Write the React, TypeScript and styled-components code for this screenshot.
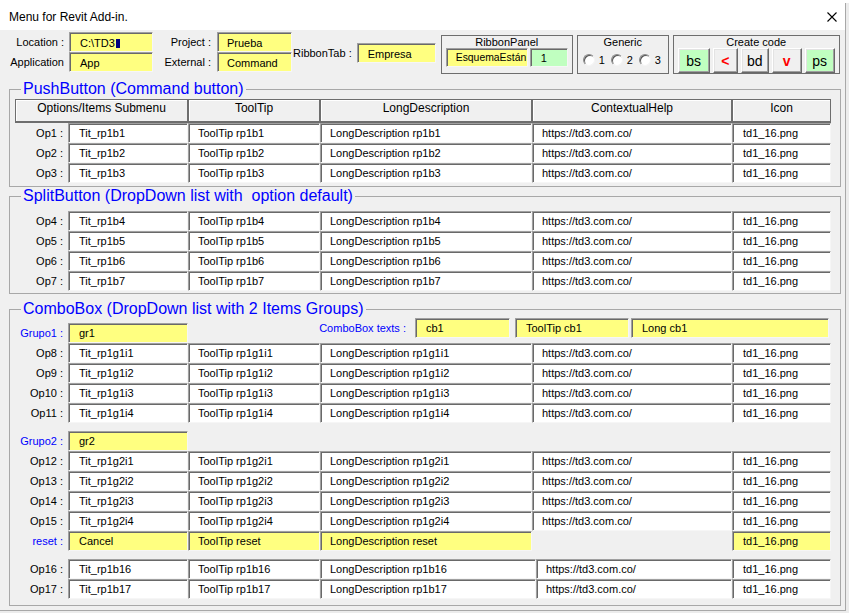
import React from 'react';
import styled, { createGlobalStyle } from 'styled-components';

const GlobalStyle = createGlobalStyle`
  * { box-sizing: border-box; }
  html, body { margin: 0; padding: 0; }
  body {
    width: 849px;
    height: 613px;
    overflow: hidden;
    background: #ffffff;
    font-family: "Liberation Sans", Arial, sans-serif;
    color: #000000;
  }
`;

type Tone = 'white' | 'yellow' | 'green';
const TONES: Record<Tone, string> = {
  white: '#ffffff',
  yellow: '#ffff80',
  green: '#c0ffc0',
};

const URL = 'https://td3.com.co/';
const ICON = 'td1_16.png';
const COLS = '53px 120px 132px 212px 200px 99px';
const COLS_WIDE = '53px 120px 132px 216px 196px 99px';

const Desktop = styled.div`
  width: 849px;
  height: 613px;
  padding-top: 3px;
  background: linear-gradient(to bottom, #ffffff 0, #ffffff 3px, #ececec 3px);
`;

const Window = styled.div`
  width: 846px;
  height: 608px;
  background: #f0f0f0;
  border-right: 1px solid #a8a8a8;
  border-bottom: 1px solid #a8a8a8;
  display: flex;
  flex-direction: column;
`;

const TitleBar = styled.div`
  flex: none;
  height: 27px;
  background: #ffffff;
  display: flex;
  align-items: center;
  justify-content: space-between;
  padding: 0 8px 0 9px;
  font-size: 12px;
  line-height: 14px;
`;

const Content = styled.div`
  flex: 1;
  padding: 2px 0 0 9px;
  display: flex;
  flex-direction: column;
`;

const TopBar = styled.div`
  display: flex;
  align-items: flex-start;
  height: 42px;
  flex: none;
`;

const FieldGrid = styled.div`
  display: grid;
  grid-template-columns: 60px 84px 64px 75px;
  grid-auto-rows: 20px;
`;

const FieldLabel = styled.div<{ $pr?: number }>`
  font-size: 11px;
  line-height: 19px;
  padding-top: 1px;
  padding-right: ${p => p.$pr ?? 5}px;
  text-align: right;
  white-space: nowrap;
`;

const Box = styled.div<{ $tone?: Tone; $w?: number; $h?: number; $pl?: number; $top?: boolean; $fs?: number }>`
  width: ${p => (p.$w ? `${p.$w}px` : 'auto')};
  height: ${p => p.$h ?? 20}px;
  flex: none;
  background: ${p => TONES[p.$tone ?? 'white']};
  border-style: solid;
  border-width: 1px;
  border-color: #a0a0a0 #f6f6f6 #f6f6f6 #a0a0a0;
  box-shadow: inset 1px 1px 0 #696969;
  padding: ${p => (p.$top ? 2 : 1)}px 0 0 ${p => p.$pl ?? 9}px;
  font-size: ${p => p.$fs ?? 11}px;
  line-height: ${p => (p.$top ? 17 : 16)}px;
  white-space: nowrap;
  overflow: hidden;
`;

const Caret = styled.span`
  display: inline-block;
  width: 4px;
  height: 9px;
  margin-left: 1px;
  vertical-align: -1px;
  background: #000080;
`;

const TabField = styled.div`
  display: flex;
  align-items: center;
  margin: 11px 0 0 1px;
`;

const InlineLabel = styled.span`
  font-size: 11px;
  padding-right: 5px;
  white-space: nowrap;
`;

const Frame = styled.div<{ $w: number; $ml: number }>`
  width: ${p => p.$w}px;
  height: 39px;
  margin: 3px 0 0 ${p => p.$ml}px;
  border: 1px solid #6e6e6e;
  display: flex;
  flex-direction: column;
`;

const FrameTitle = styled.div`
  height: 12px;
  font-size: 11px;
  line-height: 12px;
  text-align: center;
  white-space: nowrap;
`;

const FrameRow = styled.div<{ $gap: number; $pl: number }>`
  display: flex;
  align-items: center;
  gap: ${p => p.$gap}px;
  padding-left: ${p => p.$pl}px;
`;

const RadioRow = styled.div`
  display: flex;
  align-items: center;
  height: 24px;
  padding-left: 5px;
`;

const RadioItem = styled.label`
  display: flex;
  align-items: center;
  gap: 4px;
  width: 28px;
  font-size: 11px;
`;

const RadioCircle = styled.span`
  width: 12px;
  height: 12px;
  border-radius: 50%;
  background: #ffffff;
  border: 1px solid;
  border-color: #8a8a8a #f4f4f4 #f4f4f4 #8a8a8a;
  box-shadow: inset 1px 1px 0 #555555;
`;

const CodeButton = styled.button<{ $w: number; $green?: boolean; $red?: boolean }>`
  width: ${p => p.$w}px;
  height: 25px;
  margin: 0;
  padding: 0;
  background: ${p => (p.$green ? '#c0ffc0' : '#f0f0f0')};
  border: 1px solid;
  border-color: #ffffff #696969 #696969 #ffffff;
  box-shadow: inset -1px -1px 0 #a0a0a0, inset 1px 1px 0 #e3e3e3;
  font-family: "Liberation Sans", Arial, sans-serif;
  font-size: 14px;
  font-weight: ${p => (p.$red ? 700 : 400)};
  color: ${p => (p.$red ? '#ff0000' : '#000000')};
  line-height: 16px;
`;

const Group = styled.fieldset<{ $mt: number; $pt: number; $pb: number }>`
  margin: ${p => p.$mt}px 0 0 0;
  padding: ${p => p.$pt}px 8px ${p => p.$pb}px 5px;
  width: 832px;
  min-width: 0;
  border: 1px solid #a8a8a8;
  flex: none;
`;

const Legend = styled.legend`
  margin-left: 6px;
  padding: 0 2px;
  font-size: 16px;
  line-height: 18px;
  color: #0000ff;
  white-space: nowrap;
`;

const Row = styled.div<{ $cols?: string; $h?: number; $mt?: number }>`
  display: grid;
  grid-template-columns: ${p => p.$cols ?? COLS};
  height: ${p => p.$h ?? 20}px;
  margin-top: ${p => p.$mt ?? 0}px;
`;

const HeadCell = styled.div<{ $span?: number }>`
  grid-column: span ${p => p.$span ?? 1};
  height: 24px;
  background: #f0f0f0;
  border: 1px solid #6e6e6e;
  border-bottom-width: 2px;
  box-shadow: inset 1px 1px 0 #ffffff;
  font-size: 12px;
  line-height: 17px;
  text-align: center;
  white-space: nowrap;
  overflow: hidden;
`;

const RowLabel = styled.div<{ $blue?: boolean; $bottom?: boolean }>`
  align-self: ${p => (p.$bottom ? 'end' : 'stretch')};
  height: 20px;
  font-size: 11px;
  line-height: 20px;
  padding-right: 5px;
  text-align: right;
  white-space: nowrap;
  color: ${p => (p.$blue ? '#0000ff' : '#000000')};
`;

const BottomBox = styled(Box)`
  align-self: end;
`;

const ComboTexts = styled.div`
  grid-column: 3 / 7;
  align-self: start;
  height: 20px;
  display: flex;
  align-items: center;
  justify-content: flex-end;
  padding-right: 2px;
`;

const BlueText = styled.span<{ $mr?: number }>`
  font-size: 11px;
  color: #0000ff;
  margin-right: ${p => p.$mr ?? 0}px;
  white-space: nowrap;
`;

const Spacer = styled.div<{ $ml?: number }>`
  margin-left: ${p => p.$ml ?? 0}px;
`;

const CloseIcon = () => (
  <svg width="10" height="10" viewBox="0 0 10 10" aria-hidden="true">
    <path d="M0.5 0.5 L9.5 9.5 M9.5 0.5 L0.5 9.5" stroke="#000" strokeWidth="1.1" fill="none" />
  </svg>
);

type RowData = { label: string; cells: (string | null)[]; tone?: Tone; blue?: boolean };

const mk = (label: string, base: string): RowData => ({
  label,
  cells: [`Tit_${base}`, `ToolTip ${base}`, `LongDescription ${base}`, URL, ICON],
});

const pushRows = [1, 2, 3].map(i => mk(`Op${i} :`, `rp1b${i}`));
const splitRows = [4, 5, 6, 7].map(i => mk(`Op${i} :`, `rp1b${i}`));
const group1Rows = [1, 2, 3, 4].map(i => mk(`Op${i + 7} :`, `rp1g1i${i}`));
const group2Rows = [1, 2, 3, 4].map(i => mk(`Op${i + 11} :`, `rp1g2i${i}`));
const tailRows = [16, 17].map(i => mk(`Op${i} :`, `rp1b${i}`));
const resetRow: RowData = {
  label: 'reset :',
  cells: ['Cancel', 'ToolTip reset', 'LongDescription reset', null, ICON],
  tone: 'yellow',
  blue: true,
};

const DataRow: React.FC<{ row: RowData; cols?: string; mt?: number }> = ({ row, cols, mt }) => (
  <Row $cols={cols} $mt={mt}>
    <RowLabel $blue={row.blue}>{row.label}</RowLabel>
    {row.cells.map((c, i) =>
      c === null ? <div key={i} /> : (
        <Box key={i} $tone={row.tone} $pl={i === 0 || i === 4 ? 10 : 9}>{c}</Box>
      )
    )}
  </Row>
);

export default function App() {
  return (
    <>
      <GlobalStyle />
      <Desktop>
        <Window>
          <TitleBar>
            <span>Menu for Revit Add-in.</span>
            <CloseIcon />
          </TitleBar>
          <Content>
            <TopBar>
              <FieldGrid>
                <FieldLabel>Location :</FieldLabel>
                <Box $tone="yellow" $top $pl={10}>C:\TD3<Caret /></Box>
                <FieldLabel $pr={6}>Project :</FieldLabel>
                <Box $tone="yellow" $top $pl={9}>Prueba</Box>
                <FieldLabel>Application</FieldLabel>
                <Box $tone="yellow" $top $pl={10}>App</Box>
                <FieldLabel $pr={6}>External :</FieldLabel>
                <Box $tone="yellow" $top $pl={9}>Command</Box>
              </FieldGrid>
              <TabField>
                <InlineLabel>RibbonTab :</InlineLabel>
                <Box $tone="yellow" $top $w={79} $pl={10}>Empresa</Box>
              </TabField>
              <Frame $w={132} $ml={5}>
                <FrameTitle>RibbonPanel</FrameTitle>
                <FrameRow $gap={2} $pl={4}>
                  <Box $tone="yellow" $w={82} $h={19} $pl={9} $fs={10.4}>EsquemaEstán</Box>
                  <Box $tone="green" $w={38} $h={19} $pl={10}>1</Box>
                </FrameRow>
              </Frame>
              <Frame $w={92} $ml={4}>
                <FrameTitle>Generic</FrameTitle>
                <RadioRow>
                  {['1', '2', '3'].map(n => (
                    <RadioItem key={n}>
                      <RadioCircle />
                      <span>{n}</span>
                    </RadioItem>
                  ))}
                </RadioRow>
              </Frame>
              <Frame $w={167} $ml={4}>
                <FrameTitle>Create code</FrameTitle>
                <FrameRow $gap={3} $pl={4}>
                  <CodeButton $w={32} $green>bs</CodeButton>
                  <CodeButton $w={25} $red>&lt;</CodeButton>
                  <CodeButton $w={28}>bd</CodeButton>
                  <CodeButton $w={30} $red>v</CodeButton>
                  <CodeButton $w={30} $green>ps</CodeButton>
                </FrameRow>
              </Frame>
            </TopBar>

            <Group $mt={6} $pt={1} $pb={3}>
              <Legend>PushButton (Command button)</Legend>
              <Row $h={24}>
                <HeadCell $span={2}>Options/Items Submenu</HeadCell>
                <HeadCell>ToolTip</HeadCell>
                <HeadCell>LongDescription</HeadCell>
                <HeadCell>ContextualHelp</HeadCell>
                <HeadCell>Icon</HeadCell>
              </Row>
              {pushRows.map(r => <DataRow key={r.label} row={r} />)}
            </Group>

            <Group $mt={0} $pt={6} $pb={2}>
              <Legend>SplitButton (DropDown list with&nbsp; option default)</Legend>
              {splitRows.map(r => <DataRow key={r.label} row={r} />)}
            </Group>

            <Group $mt={6} $pt={0} $pb={6}>
              <Legend>ComboBox (DropDown list with 2 Items Groups)</Legend>
              <Row $h={25}>
                <RowLabel $blue $bottom>Grupo1 :</RowLabel>
                <BottomBox $tone="yellow" $pl={10}>gr1</BottomBox>
                <ComboTexts>
                  <BlueText $mr={9}>ComboBox texts :</BlueText>
                  <Box $tone="yellow" $w={95} $pl={10}>cb1</Box>
                  <Spacer $ml={5} />
                  <Box $tone="yellow" $w={114} $pl={10}>ToolTip cb1</Box>
                  <Spacer $ml={2} />
                  <Box $tone="yellow" $w={198} $pl={10}>Long cb1</Box>
                </ComboTexts>
              </Row>
              {group1Rows.map(r => <DataRow key={r.label} row={r} />)}
              <Row $mt={8}>
                <RowLabel $blue>Grupo2 :</RowLabel>
                <Box $tone="yellow" $pl={10}>gr2</Box>
              </Row>
              {group2Rows.map(r => <DataRow key={r.label} row={r} />)}
              <DataRow row={resetRow} />
              {tailRows.map((r, i) => (
                <DataRow key={r.label} row={r} cols={COLS_WIDE} mt={i === 0 ? 8 : 0} />
              ))}
            </Group>
          </Content>
        </Window>
      </Desktop>
    </>
  );
}
